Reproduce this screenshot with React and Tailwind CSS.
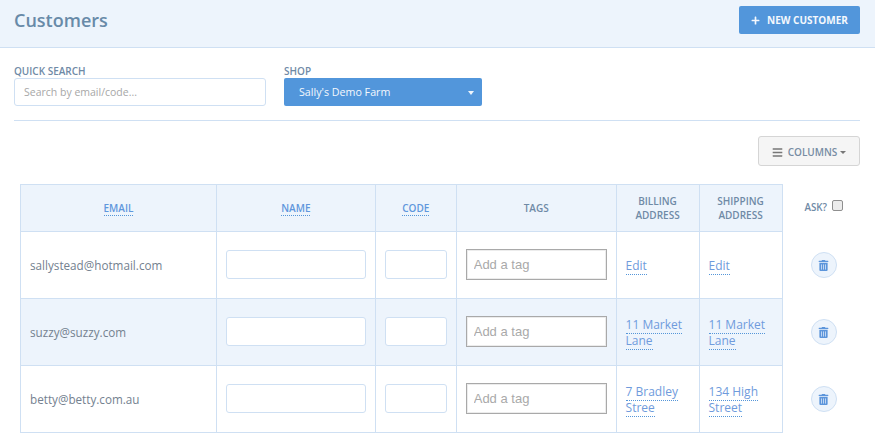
import React from 'react';
import { FaBars, FaPlus, FaTrashAlt } from 'react-icons/fa';

const customers = [
    { email: 'sallystead@hotmail.com', billing: ['Edit'], shipping: ['Edit'] },
    { email: 'suzzy@suzzy.com', billing: ['11 Market', 'Lane'], shipping: ['11 Market', 'Lane'], shaded: true },
    { email: 'betty@betty.com.au', billing: ['7 Bradley', 'Stree'], shipping: ['134 High', 'Street'] },
];

const cell = 'border border-[#cfe0f3] px-[9px] align-middle';
const head = 'border border-[#cfe0f3] px-1 text-center align-middle text-[10px] leading-[14px] font-semibold text-[#6f8aa6] uppercase';
const sortLink = 'border-b border-dotted border-[#5596d9] text-[#5f97dc]';

const AddressLink = ({ lines }) => (
    <div className="pt-[2px] text-[12px] leading-4 text-[#6f9bdc]">
        {lines.map((line) => (
            <div key={line}>
                <span className="border-b border-dotted border-[#5596d9]">{line}</span>
            </div>
        ))}
    </div>
);

const App = () => {
    return (
        <div className="h-[447px] w-[875px] overflow-hidden bg-white font-['Open_Sans',sans-serif]">
            <header className="flex h-[48px] items-center justify-between border-b border-[#cfe0f3] bg-[#edf4fc] pr-[15px] pl-[14px]">
                <h1 className="mb-[7px] text-[18px] leading-6 font-semibold text-[#688aa8]">Customers</h1>
                <button className="mb-[7px] flex h-[28px] w-[121px] items-center justify-center gap-[7px] rounded-[2px] bg-[#5296db] text-[10px] font-bold text-[#f4f8fd] uppercase">
                    <FaPlus className="text-[9px]" />
                    New Customer
                </button>
            </header>

            <main className="px-[15px] pl-[14px]">
                <section className="flex gap-[18px] border-b border-[#cfe0f3] pt-[18px] pb-[14px]">
                    <div className="w-[252px]">
                        <label className="block h-[12px] text-[10px] leading-[11px] font-semibold text-[#6f8aa6] uppercase">Quick Search</label>
                        <input
                            placeholder="Search by email/code..."
                            className="h-[28px] w-full rounded-[3px] border border-[#cfe0f3] bg-white px-[9px] text-[10.5px] text-[#777] placeholder:text-[#a7a7a7]"
                        />
                    </div>
                    <div className="w-[198px]">
                        <label className="block h-[12px] text-[10px] leading-[11px] font-semibold text-[#6f8aa6] uppercase">Shop</label>
                        <div className="flex h-[28px] items-center justify-between rounded-[2px] bg-[#5296db] pr-[8px] pl-[15px] text-[10.7px] font-normal text-[#f4f8fd]">
                            Sally's Demo Farm
                            <span className="mt-[2px] h-0 w-0 border-x-[3px] border-t-[4px] border-x-transparent border-t-[#eef5fc]" />
                        </div>
                    </div>
                </section>

                <div className="flex justify-end pt-[15px] pb-[18px]">
                    <button className="flex h-[30px] w-[102px] items-center justify-center rounded-[3px] border border-[#d5d5d5] bg-[#f5f5f5] pt-[2px] text-[10px] font-semibold text-[#778ca3] uppercase">
                        <FaBars className="mr-[5px] text-[11px] text-[#777]" />
                        Columns
                        <span className="ml-[3px] h-0 w-0 border-x-[3px] border-t-[3px] border-x-transparent border-t-[#777]" />
                    </button>
                </div>

                <table className="ml-[6px] table-fixed border-collapse">
                    <colgroup>
                        <col className="w-[196px]" />
                        <col className="w-[159px]" />
                        <col className="w-[81px]" />
                        <col className="w-[160px]" />
                        <col className="w-[83px]" />
                        <col className="w-[83px]" />
                        <col className="w-[78px]" />
                    </colgroup>
                    <thead>
                        <tr className="h-[47px]">
                            <th className={`${head} bg-[#edf4fc]`}><span className={sortLink}>Email</span></th>
                            <th className={`${head} bg-[#edf4fc]`}><span className={sortLink}>Name</span></th>
                            <th className={`${head} bg-[#edf4fc]`}><span className={sortLink}>Code</span></th>
                            <th className={`${head} bg-[#edf4fc]`}>Tags</th>
                            <th className={`${head} bg-[#edf4fc]`}>Billing<br />Address</th>
                            <th className={`${head} bg-[#edf4fc]`}>Shipping<br />Address</th>
                            <th className="text-center align-middle text-[9.8px] font-semibold text-[#6f8aa6] uppercase">
                                <div className="flex items-center justify-center gap-[5px] pl-[5px]">
                                    Ask?
                                    <input type="checkbox" className="mb-[6px] h-[11px] w-[11px] appearance-none rounded-[2px] border border-[#8f8f8f] bg-[#ececec]" />
                                </div>
                            </th>
                        </tr>
                    </thead>
                    <tbody>
                        {customers.map((customer) => (
                            <tr key={customer.email} className="h-[67px]">
                                <td className={`${cell} pt-[2px] text-[11.7px] text-[#74818f] ${customer.shaded ? 'bg-[#edf4fc]' : 'bg-white'}`}>{customer.email}</td>
                                <td className={`${cell} ${customer.shaded ? 'bg-[#edf4fc]' : 'bg-white'}`}>
                                    <input className="mb-[2px] block h-[29px] w-full rounded-[3px] border border-[#cfe0f3] bg-white" />
                                </td>
                                <td className={`${cell} ${customer.shaded ? 'bg-[#edf4fc]' : 'bg-white'}`}>
                                    <input className="mb-[2px] block h-[29px] w-full rounded-[3px] border border-[#cfe0f3] bg-white" />
                                </td>
                                <td className={`${cell} ${customer.shaded ? 'bg-[#edf4fc]' : 'bg-white'}`}>
                                    <input
                                        placeholder="Add a tag"
                                        className="mb-[2px] block h-[31px] w-full border border-[#a9a9a9] bg-white pl-[7px] font-['Liberation_Sans',sans-serif] text-[13px] shadow-[inset_0_0_0_1px_#ececec] placeholder:text-[#a9a9a9]"
                                    />
                                </td>
                                <td className={`${cell} ${customer.shaded ? 'bg-[#edf4fc]' : 'bg-white'}`}><AddressLink lines={customer.billing} /></td>
                                <td className={`${cell} ${customer.shaded ? 'bg-[#edf4fc]' : 'bg-white'}`}><AddressLink lines={customer.shipping} /></td>
                                <td className="align-middle">
                                    <button className="ml-[28px] flex h-[26px] w-[26px] items-center justify-center rounded-full border border-[#cfe0f3] bg-[#edf4fc]">
                                        <FaTrashAlt className="text-[11px] text-[#5c95db]" />
                                    </button>
                                </td>
                            </tr>
                        ))}
                    </tbody>
                </table>
            </main>
        </div>
    );
};

export default App;
